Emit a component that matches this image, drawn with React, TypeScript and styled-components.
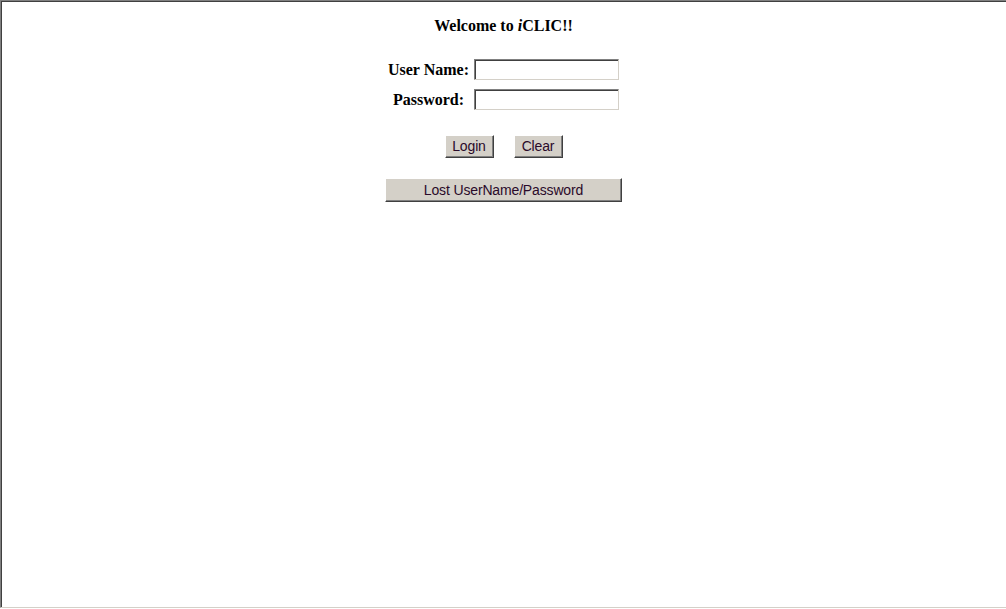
import React from 'react'
import styled, { createGlobalStyle } from 'styled-components'

const GlobalStyle = createGlobalStyle`
  html, body {
    margin: 0;
    padding: 0;
    background: #fff;
  }
`

// Sunken frame around the whole page, like an old iframe border
const Frame = styled.div`
  box-sizing: border-box;
  width: 1010px;
  height: 608px;
  border-top: 1px solid #808080;
  border-left: 1px solid #808080;
  border-bottom: 1px solid #d4d0c8;
  box-shadow: inset 1px 1px 0 #404040;
  display: flex;
  flex-flow: column;
  align-items: center;
  padding: 15px 4px 0 0;
`

const Title = styled.h1`
  margin: 0 0 23px;
  font-family: 'Liberation Serif', 'Times New Roman', serif;
  font-size: 16px;
  font-weight: 700;
  line-height: 20px;
  color: #000;
`

const FormGrid = styled.div`
  display: grid;
  grid-template-columns: auto auto;
  column-gap: 5px;
  row-gap: 9px;
  align-items: center;
`

const Label = styled.label`
  font-family: 'Liberation Serif', 'Times New Roman', serif;
  font-size: 16px;
  font-weight: 700;
  text-align: center;
  color: #000;
`

const TextInput = styled.input`
  box-sizing: border-box;
  width: 145px;
  height: 21px;
  margin: 0;
  padding: 1px 3px;
  border-top: 1px solid #808080;
  border-left: 1px solid #808080;
  border-right: 1px solid #d4d0c8;
  border-bottom: 1px solid #d4d0c8;
  box-shadow: inset 1px 1px 0 #404040;
  background: #fff;
  font-family: 'Liberation Sans', Arial, sans-serif;
  font-size: 13px;
  outline: none;
`

const ButtonRow = styled.div`
  display: flex;
  gap: 20px;
  margin-top: 25px;
`

const Button = styled.button<{ wide?: boolean }>`
  box-sizing: border-box;
  width: ${({ wide }) => (wide ? '237px' : '49px')};
  height: ${({ wide }) => (wide ? '24px' : '23px')};
  margin: 0;
  padding: 0 0 1px;
  background: #d4d0c8;
  border-top: 1px solid #fff;
  border-left: 1px solid #fff;
  border-right: 1px solid #404040;
  border-bottom: 1px solid #404040;
  box-shadow: inset -1px -1px 0 #808080;
  font-family: 'Liberation Sans', Arial, sans-serif;
  font-size: 14px;
  letter-spacing: -0.15px;
  color: #2a0a2a;
  cursor: pointer;
`

const LostRow = styled.div`
  margin-top: 20px;
`

export default function App() {
  return (
    <>
      <GlobalStyle />
      <Frame>
        <Title>
          Welcome to <i>i</i>CLIC!!
        </Title>
        <FormGrid>
          <Label htmlFor='user'>User Name:</Label>
          <TextInput id='user' type='text' />
          <Label htmlFor='pass'>Password:</Label>
          <TextInput id='pass' type='password' />
        </FormGrid>
        <ButtonRow>
          <Button>Login</Button>
          <Button>Clear</Button>
        </ButtonRow>
        <LostRow>
          <Button wide>Lost UserName/Password</Button>
        </LostRow>
      </Frame>
    </>
  )
}
